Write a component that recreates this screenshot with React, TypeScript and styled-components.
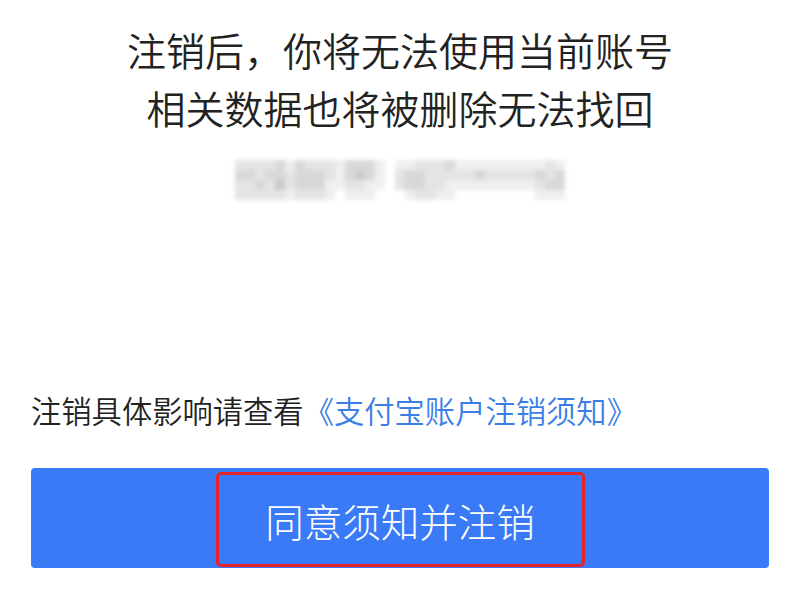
import styled, { createGlobalStyle } from "styled-components";

const GlobalStyle = createGlobalStyle`
  html, body {
    margin: 0;
    padding: 0;
    background: #fff;
  }
  body {
    font-family: "Noto Sans CJK SC", "Noto Sans", sans-serif;
  }
`;

const Page = styled.div`
  width: 800px;
  height: 600px;
  box-sizing: border-box;
  padding: 20px 31px 0;
  display: flex;
  flex-direction: column;
  align-items: center;
  overflow: hidden;
`;

const Title = styled.h1`
  margin: 0;
  font-size: 39px;
  line-height: 58px;
  font-weight: 350;
  color: #222;
  text-align: center;
`;

const Mosaic = styled.div`
  margin-top: 24px;
  display: grid;
  grid-template-columns: repeat(33, 10px);
  grid-auto-rows: 10px;
  filter: blur(2px);
`;

const Tile = styled.div<{ $level: number }>`
  background: ${({ $level }) =>
    ["#ffffff", "#efefef", "#e4e4e4", "#d8d8d8", "#cbcbcb"][$level]};
`;

const Notice = styled.p`
  align-self: stretch;
  margin: 190px 0 0;
  font-size: 30.3px;
  line-height: 40px;
  font-weight: 350;
  color: #222;
`;

const Link = styled.a`
  color: #3a7ee6;
  text-decoration: none;
`;

const Button = styled.button`
  align-self: stretch;
  margin-top: 38px;
  height: 100px;
  border: none;
  border-radius: 4px;
  background: #3a7af6;
  display: flex;
  align-items: center;
  justify-content: center;
  padding: 0;
  font-family: inherit;
`;

const Highlight = styled.span`
  width: 369px;
  height: 95px;
  box-sizing: border-box;
  margin-top: 3px;
  border: 3px solid #e8242b;
  border-radius: 5px;
  display: flex;
  align-items: center;
  justify-content: center;
  font-size: 38.5px;
  color: #fff;
  font-weight: 300;
`;

const rows = [
  "222231322213331011222311111111121",
  "332332333213431023322222322222323",
  "223242333112211023322111111111233",
  "222221222101110001221100000000111",
];

export default function App() {
  return (
    <>
      <GlobalStyle />
      <Page>
        <Title>
          注销后，你将无法使用当前账号
          <br />
          相关数据也将被删除无法找回
        </Title>
        <Mosaic>
          {rows.flatMap((row, r) =>
            row.split("").map((c, i) => <Tile key={`${r}-${i}`} $level={Number(c)} />)
          )}
        </Mosaic>
        <Notice>
          注销具体影响请查看<Link href="#">《支付宝账户注销须知》</Link>
        </Notice>
        <Button>
          <Highlight>同意须知并注销</Highlight>
        </Button>
      </Page>
    </>
  );
}
